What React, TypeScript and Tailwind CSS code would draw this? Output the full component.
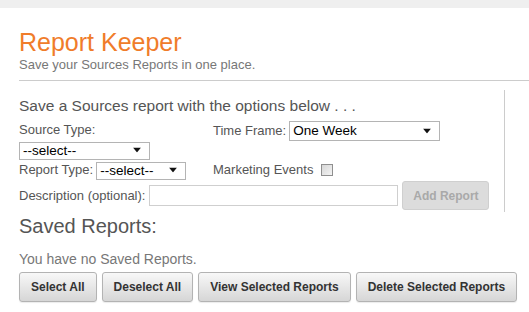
import React from "react";

function Caret() {
  return (
    <svg
      className="pointer-events-none absolute right-[9px] top-1/2 -translate-y-1/2"
      width="8"
      height="5"
      viewBox="0 0 8 5"
    >
      <path d="M0 0 H8 L4 5 Z" fill="#111" />
    </svg>
  );
}

function Select({ box, value }: { box: string; value: string }) {
  return (
    <div className={"relative " + box}>
      <select
        defaultValue={value}
        className="h-full w-full appearance-none border border-[#b4b4b4] bg-white pl-[3px] text-[13.5px] leading-none text-black outline-none"
      >
        <option>{value}</option>
      </select>
      <Caret />
    </div>
  );
}

function Btn({ children }: { children: React.ReactNode }) {
  return (
    <button className="h-[30px] rounded-[3px] border border-[#b3b3b3] bg-gradient-to-b from-[#f8f8f8] to-[#d6d6d6] px-[11px] text-[12px] font-bold text-[#333] shadow-[0_1px_1px_rgba(0,0,0,0.08)]">
      {children}
    </button>
  );
}

export default function App() {
  return (
    <div className="h-[312px] w-[529px] overflow-hidden bg-white font-['Liberation_Sans',Arial,sans-serif]">
      <div className="h-[8px] bg-[#efefef]" />
      <div className="pl-[19px]">
        <h1 className="mt-[20px] text-[25px] leading-[29px] text-[#f07c2a]">Report Keeper</h1>
        <p className="text-[13px] leading-[15px] text-[#777]">Save your Sources Reports in one place.</p>
        <div className="mt-[8px] border-t border-[#cccccc]" />

        <div className="mt-[9px] w-[486px] border-r border-[#cccccc] pb-[2px] pt-[7px]">
          <div className="text-[15.5px] leading-[18px] text-[#555]">
            Save a Sources report with the options below . . .
          </div>

          <div className="mt-[6px] grid grid-cols-[194px_1fr] text-[13px] text-[#555]">
            <div>
              <div className="leading-[18px]">Source Type:</div>
              <Select box="mt-[2px] h-[18px] w-[131px]" value="--select--" />
            </div>
            <div className="flex h-[20px] items-center">
              <span className="leading-[18px]">Time Frame:</span>
              <Select box="ml-[3px] h-[20px] w-[151px]" value="One Week" />
            </div>

            <div className="flex h-[22px] items-center">
              <span className="leading-[18px]">Report Type:</span>
              <Select box="ml-[3px] h-[18px] w-[90px]" value="--select--" />
            </div>
            <div className="flex h-[22px] items-center">
              <span className="leading-[18px]">Marketing Events</span>
              <input
                type="checkbox"
                className="ml-[8px] h-[12px] w-[12px] appearance-none border border-[#8f8f8f] bg-gradient-to-br from-[#d6d6d6] to-[#f4f4f4]"
              />
            </div>

            <div className="col-span-2 flex h-[29px] items-center">
              <span className="leading-[18px]">Description (optional):</span>
              <input
                type="text"
                className="ml-[4px] h-[21px] w-[249px] border border-[#cfcfcf] bg-white outline-none"
              />
              <button
                disabled
                className="ml-[4px] h-[29px] w-[87px] rounded-[3px] border border-[#cfcfcf] bg-[#dcdcdc] text-[12px] font-bold text-[#a9a9a9]"
              >
                Add Report
              </button>
            </div>
          </div>
        </div>

        <h2 className="mt-[3px] text-[20px] leading-[23px] text-[#555]">Saved Reports:</h2>
        <p className="mt-[13px] text-[14px] leading-[16px] text-[#777]">You have no Saved Reports.</p>
        <div className="mt-[5px] flex gap-[5px]">
          <Btn>Select All</Btn>
          <Btn>Deselect All</Btn>
          <Btn>View Selected Reports</Btn>
          <Btn>Delete Selected Reports</Btn>
        </div>
      </div>
    </div>
  );
}
